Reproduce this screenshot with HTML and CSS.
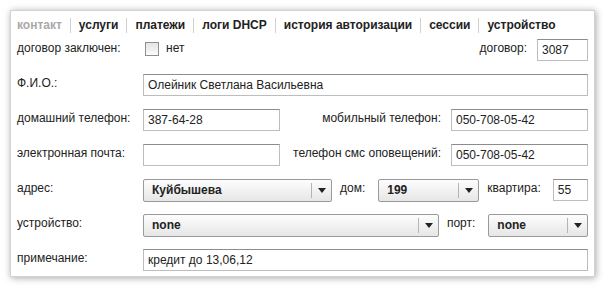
FILE: index.html
```html
<!DOCTYPE html>
<html lang="ru">
<head>
    <meta charset="UTF-8">
    <title>Контакт</title>
    <link rel="stylesheet" href="styles.css">
</head>
<body>
    <div id="panel">
        <ul id="tabs">
            <li class="current">контакт</li>
            <li>услуги</li>
            <li>платежи</li>
            <li>логи DHCP</li>
            <li>история авторизации</li>
            <li>сессии</li>
            <li>устройство</li>
        </ul>

        <div class="row">
            <label class="lbl">договор заключен:</label>
            <span class="check"></span>
            <span class="check-text">нет</span>
            <span class="lbl-right">договор:</span>
            <input class="txt w-contract" type="text" value="3087">
        </div>

        <div class="row">
            <label class="lbl">Ф.И.О.:</label>
            <input class="txt grow" type="text" value="Олейник Светлана Васильевна">
        </div>

        <div class="row">
            <label class="lbl">домашний телефон:</label>
            <input class="txt w-phone" type="text" value="387-64-28">
            <span class="lbl-right">мобильный телефон:</span>
            <input class="txt w-phone" type="text" value="050-708-05-42">
        </div>

        <div class="row">
            <label class="lbl">электронная почта:</label>
            <input class="txt w-phone" type="text" value="">
            <span class="lbl-right">телефон смс оповещений:</span>
            <input class="txt w-phone" type="text" value="050-708-05-42">
        </div>

        <div class="row">
            <label class="lbl">адрес:</label>
            <div class="sel w-street"><span class="sel-val">Куйбышева</span><span class="sel-arrow"></span></div>
            <span class="lbl-mid">дом:</span>
            <div class="sel w-house"><span class="sel-val">199</span><span class="sel-arrow"></span></div>
            <span class="lbl-mid flat">квартира:</span>
            <input class="txt w-flat" type="text" value="55">
        </div>

        <div class="row">
            <label class="lbl">устройство:</label>
            <div class="sel w-device"><span class="sel-val">none</span><span class="sel-arrow"></span></div>
            <span class="lbl-mid">порт:</span>
            <div class="sel w-port"><span class="sel-val">none</span><span class="sel-arrow"></span></div>
        </div>

        <div class="row">
            <label class="lbl">примечание:</label>
            <input class="txt grow" type="text" value="кредит до 13,06,12">
        </div>
    </div>
</body>
</html>
```

FILE: styles.css
```css
*{
    margin: 0;
    padding: 0;
    box-sizing: border-box;
}
body{
    font-family: "Liberation Sans", Arial, sans-serif;
    font-size: 12px;
    color: #222;
    background: #fff;
}
ul{
    list-style: none;
}
#panel{
    margin: 10px;
    width: 585px;
    height: 267px;
    background: #fff;
    border: 1px solid #d2d2d2;
    box-shadow: 1px 1px 7px rgba(0,0,0,0.35);
    padding: 0 6px;
}
#tabs{
    display: flex;
    height: 28px;
    align-items: center;
    font-weight: bold;
    color: #222;
}
#tabs li{
    padding: 0 8px;
    border-left: 1px solid #d0d0d0;
    line-height: 15px;
    cursor: pointer;
}
#tabs li:first-child{
    border-left: none;
    padding-left: 0;
}
#tabs .current{
    color: #a9a9a9;
}
.row{
    display: flex;
    align-items: center;
    height: 22px;
    margin-bottom: 13px;
}
.lbl{
    width: 126px;
    flex-shrink: 0;
    align-self: flex-start;
    line-height: 18px;
}
.lbl-right{
    flex: 1;
    text-align: right;
    margin-right: 10px;
    align-self: flex-start;
    line-height: 18px;
}
.lbl-mid{
    margin: 0 13px 0 8px;
    align-self: flex-start;
    line-height: 18px;
}
.lbl-mid.flat{
    margin-right: 12px;
}
.txt{
    height: 22px;
    border: 1px solid #bdbdbd;
    border-top-color: #8c8c8c;
    padding: 0 4px;
    font: 12px "Liberation Sans", Arial, sans-serif;
    color: #222;
    outline: none;
}
.grow{
    flex: 1;
}
.w-contract{
    width: 51px;
}
.w-phone{
    width: 137px;
}
.w-flat{
    width: 35px;
}
.check{
    width: 14px;
    height: 14px;
    margin-left: 2px;
    border: 1px solid #8f8f8f;
    background: linear-gradient(#e4e4e4, #fbfbfb);
    align-self: flex-start;
    margin-top: 3px;
}
.check-text{
    margin-left: 7px;
    align-self: flex-start;
    line-height: 18px;
}
.sel{
    display: flex;
    height: 23px;
    border: 1px solid #9a9a9a;
    border-radius: 2px;
    background: linear-gradient(#fdfdfd, #e6e6e6);
    font-weight: bold;
    align-items: center;
}
.sel-val{
    flex: 1;
    padding-left: 8px;
}
.sel-arrow{
    width: 20px;
    height: 15px;
    border-left: 1px solid #b5b5b5;
    position: relative;
}
.sel-arrow:after{
    content: "";
    position: absolute;
    left: 6px;
    top: 5px;
    border-left: 4px solid transparent;
    border-right: 4px solid transparent;
    border-top: 5px solid #222;
}
.w-street{
    width: 189px;
}
.w-house{
    width: 101px;
}
.w-device{
    width: 297px;
}
.w-port{
    width: 100px;
}
```
